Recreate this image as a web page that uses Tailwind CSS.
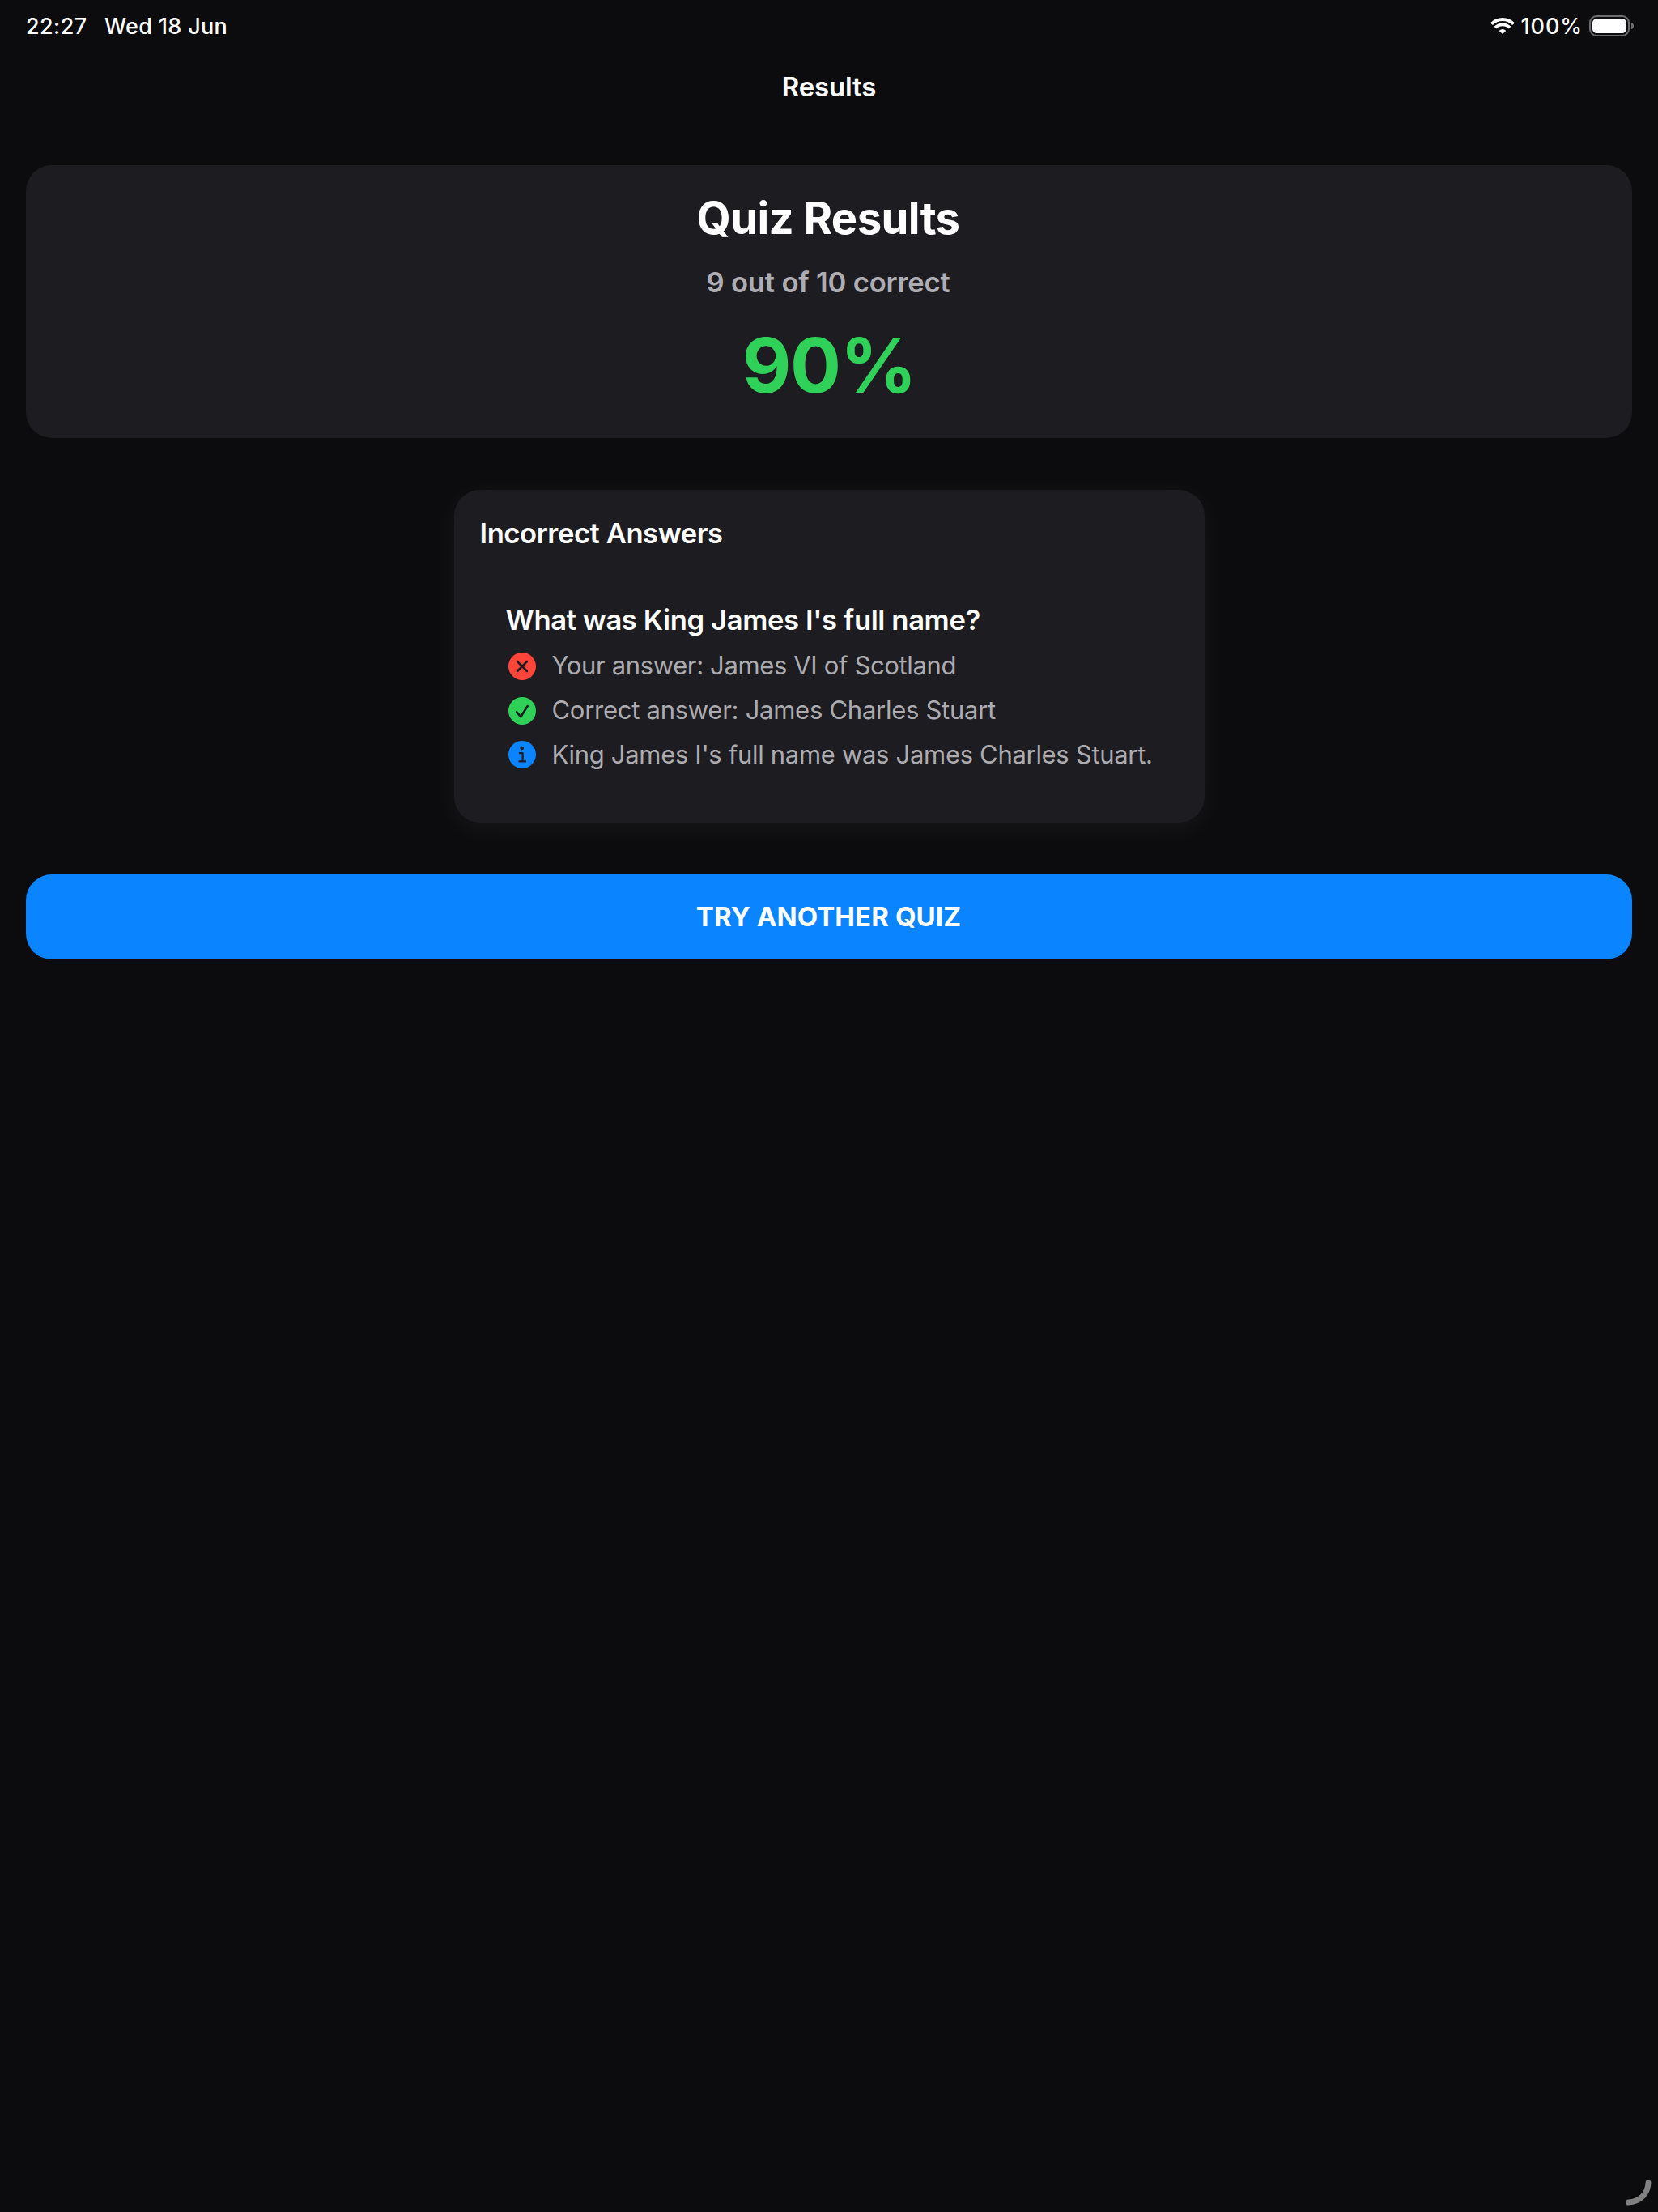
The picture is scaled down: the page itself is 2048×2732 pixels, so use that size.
<!DOCTYPE html>
<html lang="en">
<head>
<meta charset="utf-8">
<title>Results</title>
<script src="https://cdn.jsdelivr.net/npm/@tailwindcss/browser@4"></script>
</head>
<body class="bg-[#0c0c0e] font-['Inter',sans-serif] text-white">
<div class="relative flex h-[2732px] w-[2048px] flex-col overflow-hidden">

  <!-- Status bar -->
  <div class="flex h-16 items-center justify-between pl-8 pr-[30px] text-[27px] font-medium leading-8">
    <div class="flex gap-[21.5px] pt-px">
      <span class="tracking-[0.4px]">22:27</span>
      <span class="tracking-[0.32px]">Wed 18 Jun</span>
    </div>
    <div class="flex items-center">
      <svg class="h-5 w-[30px]" viewBox="0 0 30 20" fill="none">
        <path d="M1.5 7.6A19.1 19.1 0 0 1 28.5 7.6" stroke="#fff" stroke-width="4"/>
        <path d="M6 12.1A12.7 12.7 0 0 1 24 12.1" stroke="#fff" stroke-width="3.9"/>
        <path d="M11.2 16A6 6 0 0 1 18.8 16L15 19.6Z" fill="#fff" stroke="#fff" stroke-width="0.8" stroke-linejoin="round"/>
      </svg>
      <span class="ml-[8px] pt-px tracking-[0.9px]">100%</span>
      <svg class="ml-[8px] h-[26px] w-[55px]" viewBox="0 0 55 26" fill="none">
        <rect x="1" y="1" width="48" height="24" rx="8" stroke="#6d6d6f" stroke-width="2"/>
        <rect x="4" y="4" width="42" height="18" rx="5.5" fill="#fff"/>
        <path d="M52 9C54 9.6 55 11 55 13S54 16.4 52 17Z" fill="#6d6d6f"/>
      </svg>
    </div>
  </div>

  <!-- Navigation title -->
  <header class="flex h-[87px] items-center justify-center pb-0.5">
    <h1 class="text-[33px] font-semibold leading-10 tracking-[-0.16px]">Results</h1>
  </header>

  <main class="flex flex-col gap-16 px-8 pt-[53px]">
    <!-- Score summary -->
    <section class="flex h-[337px] flex-col items-center gap-6 rounded-[32px] bg-[#1d1c20] py-8">
      <h2 class="pr-0.5 text-[54.4px] font-bold leading-[67px] tracking-[-0.6px]">Quiz Results</h2>
      <p class="pr-0.5 text-[34.6px] font-semibold leading-[43px] tracking-[-0.17px] text-[#aeadb3]">9 out of 10 correct</p>
      <p class="text-[93.5px] font-bold leading-[115px] tracking-[-1.38px] text-[#30d158]">90%</p>
    </section>

    <!-- Incorrect answers -->
    <section class="flex h-[411px] w-[927px] flex-col gap-16 self-center rounded-[32px] bg-[#1d1c20] p-8 shadow-[0_8px_32px_rgba(255,255,255,0.05)]">
      <h3 class="text-[34.6px] font-semibold leading-[43px] tracking-[-0.43px]">Incorrect Answers</h3>
      <div class="flex flex-col gap-4 px-8">
        <h4 class="whitespace-nowrap text-[34.6px] font-semibold leading-[43px] tracking-[-0.38px]">What was King James I's full name?</h4>
        <div class="flex h-[39px] items-center gap-[17px]">
          <div class="flex w-10 shrink-0 justify-center">
            <svg class="size-[34px]" viewBox="0 0 34 34" fill="none">
              <circle cx="17" cy="17" r="17" fill="#ff453a"/>
              <path d="M11 11L23 23M23 11L11 23" stroke="#1d1c20" stroke-width="2.6" stroke-linecap="round"/>
            </svg>
          </div>
          <p class="whitespace-nowrap pb-0.5 text-[31px] leading-[37px] tracking-[-0.36px] text-[#acabb0]">Your answer: James VI of Scotland</p>
        </div>
        <div class="flex h-[39px] items-center gap-[17px]">
          <div class="flex w-10 shrink-0 justify-center">
            <svg class="size-[34px]" viewBox="0 0 34 34" fill="none">
              <circle cx="17" cy="17" r="17" fill="#30d158"/>
              <path d="M10.2 18.3L15.2 24.2L23.7 11" stroke="#1d1c20" stroke-width="2.6" stroke-linecap="round" stroke-linejoin="round"/>
            </svg>
          </div>
          <p class="whitespace-nowrap pb-0.5 text-[31px] leading-[37px] tracking-[-0.27px] text-[#acabb0]">Correct answer: James Charles Stuart</p>
        </div>
        <div class="flex h-[39px] items-center gap-[17px]">
          <div class="flex w-10 shrink-0 justify-center pb-px">
            <svg class="size-[34px]" viewBox="0 0 34 34" fill="none">
              <circle cx="17" cy="17" r="17" fill="#0a84ff"/>
              <circle cx="16.7" cy="9" r="2.3" fill="#1d1c20"/>
              <path d="M13.9 15.2H17.6V25.4M13.5 25.4H21" stroke="#1d1c20" stroke-width="2.3" stroke-linecap="round" stroke-linejoin="round"/>
            </svg>
          </div>
          <p class="whitespace-nowrap pb-0.5 text-[31px] leading-[37px] tracking-[-0.31px] text-[#acabb0]">King James I's full name was James Charles Stuart.</p>
        </div>
      </div>
    </section>

    <button class="flex h-[105px] items-center justify-center rounded-[32px] bg-[#0a84ff] pb-0.5 pr-px text-[33px] font-bold leading-10 tracking-[0.09px]">TRY ANOTHER QUIZ</button>
  </main>

  <!-- Window resize handle -->
  <svg class="absolute bottom-2 right-2 h-8 w-9" viewBox="0 0 36 32" fill="none">
    <path d="M7.6 28C21 27.5 31.5 18 32 4" stroke="#818181" stroke-width="7" stroke-linecap="round"/>
  </svg>
</div>
</body>
</html>
